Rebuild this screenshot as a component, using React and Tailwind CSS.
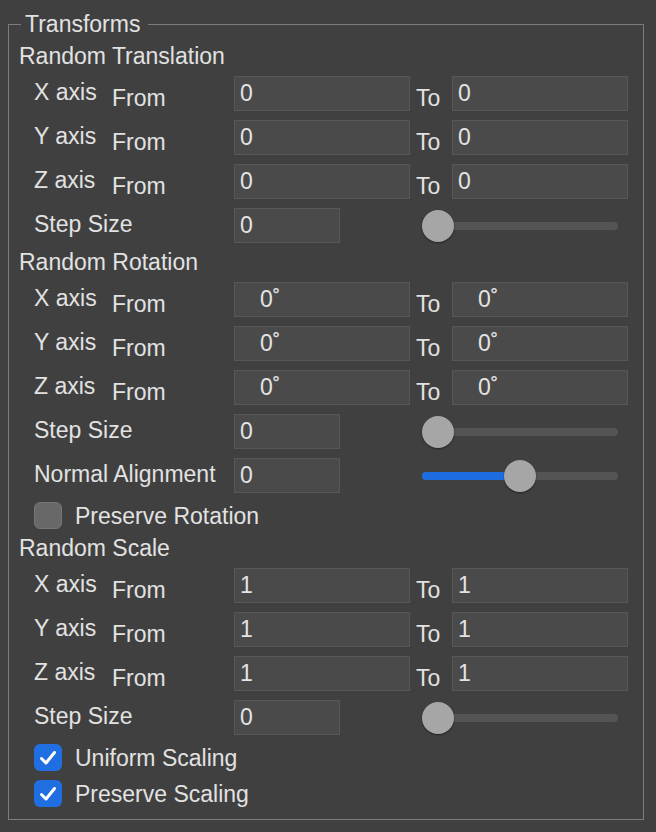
import React from "react";

const font = { fontFamily: '"Liberation Sans", Arial, sans-serif' };

const Field = ({ value, wide = true, indent = false }) => (
  <input
    readOnly
    value={value}
    className={`h-[35px] ${wide ? "w-[176px]" : "w-[106px]"} ${indent ? "pl-[25px]" : "pl-[5px]"} border border-[#575757] bg-[#4a4a4a] text-[23px] text-[#e4e4e4] outline-none`}
  />
);

const Slider = ({ value }) => (
  <div className="relative ml-[82px] h-[8px] w-[196px] rounded-full bg-[#545454]">
    <div className="h-[8px] rounded-full bg-[#1d6ce0]" style={{ width: `${16 + value * 164}px` }} />
    <div
      className="absolute top-[-12px] h-[32px] w-[32px] rounded-full bg-[#a6a6a6] shadow-[0_1px_2px_rgba(0,0,0,0.45)]"
      style={{ left: `${value * 164}px` }}
    />
  </div>
);

const AxisRow = ({ axis, from, to, deg }) => (
  <div className="flex h-[35px] items-start pl-[15px]">
    <span className="mt-[3px] w-[78px]">{axis}</span>
    <span className="mt-[9px] w-[122px]">From</span>
    <Field value={from} indent={deg} />
    <span className="mt-[9px] ml-[6px] w-[36px]">To</span>
    <Field value={to} indent={deg} />
  </div>
);

const NumRow = ({ label, value, slider }) => (
  <div className="flex h-[35px] items-center pl-[15px]">
    <span className="w-[200px] self-start mt-[3px] whitespace-nowrap">{label}</span>
    <Field value={value} wide={false} />
    <Slider value={slider} />
  </div>
);

const Check = ({ label, checked }) => (
  <div className="flex h-[27px] items-center pl-[15px]">
    {checked ? (
      <div className="flex h-[27px] w-[28px] items-center justify-center rounded-[6px] bg-[#1f6fe2]">
        <svg width="18" height="16" viewBox="0 0 18 16" fill="none">
          <path d="M2.5 8.5 L7 13 L15.5 2.5" stroke="#ffffff" strokeWidth="3" strokeLinecap="round" strokeLinejoin="round" />
        </svg>
      </div>
    ) : (
      <div className="h-[27px] w-[28px] rounded-[6px] border border-[#757575] bg-[#686868]" />
    )}
    <span className="ml-[13px]">{label}</span>
  </div>
);

const Heading = ({ children, first }) => (
  <div className={`h-[26px] ${first ? "" : "mt-[6px]"}`}>{children}</div>
);

export default function App() {
  return (
    <div className="min-h-[832px] w-full bg-[#404040] pt-[11px] text-[23px] leading-[26px] text-[#e2e2e2]" style={font}>
      <fieldset className="ml-[8px] w-[636px] border border-[#7c7c7c] pl-[10px] pt-[6px] pb-[12px]">
        <legend className="ml-[2px] pl-[4px] pr-[8px] leading-[26px]">Transforms</legend>

        <Heading first>Random Translation</Heading>
        <div className="mt-[7px] flex flex-col gap-[9px]">
          <AxisRow axis="X axis" from="0" to="0" />
          <AxisRow axis="Y axis" from="0" to="0" />
          <AxisRow axis="Z axis" from="0" to="0" />
          <NumRow label="Step Size" value="0" slider={0} />
        </div>

        <Heading>Random Rotation</Heading>
        <div className="mt-[7px] flex flex-col gap-[9px]">
          <AxisRow axis="X axis" from="0˚" to="0˚" deg />
          <AxisRow axis="Y axis" from="0˚" to="0˚" deg />
          <AxisRow axis="Z axis" from="0˚" to="0˚" deg />
          <NumRow label="Step Size" value="0" slider={0} />
          <NumRow label="Normal Alignment" value="0" slider={0.5} />
          <Check label="Preserve Rotation" />
        </div>

        <Heading>Random Scale</Heading>
        <div className="mt-[7px] flex flex-col gap-[9px]">
          <AxisRow axis="X axis" from="1" to="1" />
          <AxisRow axis="Y axis" from="1" to="1" />
          <AxisRow axis="Z axis" from="1" to="1" />
          <NumRow label="Step Size" value="0" slider={0} />
          <Check label="Uniform Scaling" checked />
          <Check label="Preserve Scaling" checked />
        </div>
      </fieldset>
    </div>
  );
}
